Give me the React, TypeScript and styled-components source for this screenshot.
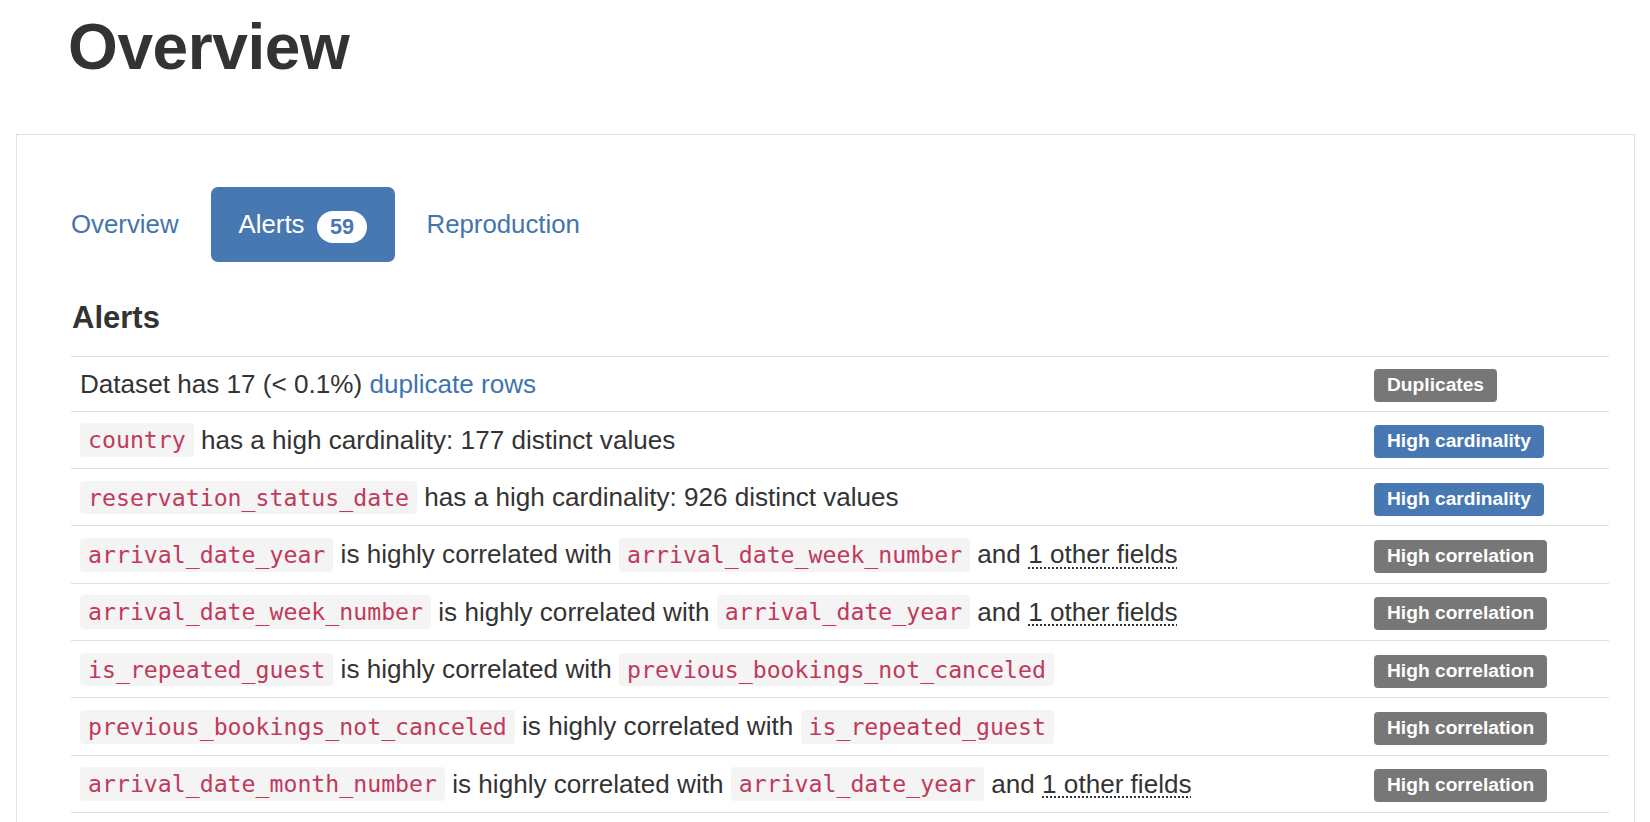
import styled, { createGlobalStyle } from 'styled-components';

type Part = { code?: string; text?: string; link?: string; abbr?: string };

interface IAlert {
  parts: Part[];
  label: string;
  kind: 'gray' | 'blue';
}

const alerts: IAlert[] = [
  {
    parts: [{ text: 'Dataset has 17 (< 0.1%) ' }, { link: 'duplicate rows' }],
    label: 'Duplicates',
    kind: 'gray',
  },
  {
    parts: [{ code: 'country' }, { text: ' has a high cardinality: 177 distinct values' }],
    label: 'High cardinality',
    kind: 'blue',
  },
  {
    parts: [{ code: 'reservation_status_date' }, { text: ' has a high cardinality: 926 distinct values' }],
    label: 'High cardinality',
    kind: 'blue',
  },
  {
    parts: [
      { code: 'arrival_date_year' },
      { text: ' is highly correlated with ' },
      { code: 'arrival_date_week_number' },
      { text: ' and ' },
      { abbr: '1 other fields' },
    ],
    label: 'High correlation',
    kind: 'gray',
  },
  {
    parts: [
      { code: 'arrival_date_week_number' },
      { text: ' is highly correlated with ' },
      { code: 'arrival_date_year' },
      { text: ' and ' },
      { abbr: '1 other fields' },
    ],
    label: 'High correlation',
    kind: 'gray',
  },
  {
    parts: [
      { code: 'is_repeated_guest' },
      { text: ' is highly correlated with ' },
      { code: 'previous_bookings_not_canceled' },
    ],
    label: 'High correlation',
    kind: 'gray',
  },
  {
    parts: [
      { code: 'previous_bookings_not_canceled' },
      { text: ' is highly correlated with ' },
      { code: 'is_repeated_guest' },
    ],
    label: 'High correlation',
    kind: 'gray',
  },
  {
    parts: [
      { code: 'arrival_date_month_number' },
      { text: ' is highly correlated with ' },
      { code: 'arrival_date_year' },
      { text: ' and ' },
      { abbr: '1 other fields' },
    ],
    label: 'High correlation',
    kind: 'gray',
  },
];

export default function App() {
  return (
    <>
      <GlobalStyle />
      <Page>
        <Title>Overview</Title>
        <Panel>
          <Nav>
            <li>
              <TabLink href="#">Overview</TabLink>
            </li>
            <li>
              <TabLink href="#" $active>
                Alerts<Count>59</Count>
              </TabLink>
            </li>
            <li>
              <TabLink href="#">Reproduction</TabLink>
            </li>
          </Nav>

          <TabContent>
            <SectionTitle>Alerts</SectionTitle>
            <AlertTable>
              <tbody>
                {alerts.map((a, i) => {
                  const hasCode = a.parts.some((p) => p.code);
                  return (
                    <Row key={i}>
                      <TextCell $code={hasCode}>
                        {a.parts.map((p, j) =>
                          p.code ? (
                            <Code key={j}>{p.code}</Code>
                          ) : p.link ? (
                            <Link key={j} href="#">
                              {p.link}
                            </Link>
                          ) : p.abbr ? (
                            <Abbr key={j} title="">
                              {p.abbr}
                            </Abbr>
                          ) : (
                            <span key={j}>{p.text}</span>
                          )
                        )}
                      </TextCell>
                      <LabelCell $code={hasCode}>
                        <Label $kind={a.kind}>{a.label}</Label>
                      </LabelCell>
                    </Row>
                  );
                })}
              </tbody>
            </AlertTable>
          </TabContent>
        </Panel>
      </Page>
    </>
  );
}

const GlobalStyle = createGlobalStyle`
  body {
    margin: 0;
    background: #fff;
    color: #333;
    font-family: "Liberation Sans", Arial, Helvetica, sans-serif;
  }
`;

const Page = styled.div`
  padding-top: 12px;
`;

const Title = styled.h1`
  margin: 0 0 52px 68px;
  font-size: 64px;
  font-weight: 700;
  line-height: 1.1;
  letter-spacing: -0.4px;
  color: #333;
`;

const Panel = styled.div`
  margin: 0 15px 0 16px;
  border: 1px solid #e1e1e1;
  padding: 52px 25px 40px 26px;
`;

const Nav = styled.ul`
  display: flex;
  gap: 4px;
  list-style: none;
  margin: 0;
  padding: 0;
`;

const TabLink = styled.a<{ $active?: boolean }>`
  display: inline-flex;
  align-items: center;
  gap: 13px;
  padding: 19px 28px;
  font-size: 25.8px;
  line-height: 36.4px;
  border-radius: 7px;
  text-decoration: none;
  color: ${(p) => (p.$active ? '#fff' : '#4474ae')};
  background: ${(p) => (p.$active ? '#4878b2' : 'transparent')};
`;

const Count = styled.span`
  margin-top: 5px;
  padding: 5px 12.5px;
  border-radius: 16px;
  background: #fff;
  color: #4878b2;
  font-size: 21.6px;
  font-weight: 700;
  line-height: 1;
`;

const TabContent = styled.div`
  padding: 39px 0 0 28px;
`;

const SectionTitle = styled.h4`
  margin: 0 0 21px 1px;
  font-size: 31px;
  font-weight: 700;
  line-height: 1.1;
`;

const AlertTable = styled.table`
  width: 100%;
  border-collapse: collapse;
  font-size: 26.1px;
  line-height: 36.6px;
`;

const Row = styled.tr`
  border-top: 1px solid #dedede;
  border-bottom: 1px solid #dedede;
`;

const TextCell = styled.td<{ $code: boolean }>`
  padding: ${(p) => (p.$code ? '9.85px' : '8.6px')} 9px;
  vertical-align: middle;
`;

const LabelCell = styled(TextCell)`
  width: 226px;
`;

const Code = styled.code`
  padding: 3.35px 8px;
  border-radius: 4px;
  background: #f4f4f4;
  color: #c03a5c;
  font-family: "DejaVu Sans Mono", "Liberation Mono", monospace;
  font-size: 23.2px;
  line-height: 1;
`;

const Link = styled.a`
  color: #3d74b1;
  text-decoration: none;
`;

const Abbr = styled.abbr`
  text-decoration: underline dotted 2px;
  text-underline-offset: 4px;
  cursor: help;
`;

const Label = styled.span<{ $kind: 'gray' | 'blue' }>`
  display: inline-block;
  vertical-align: middle;
  padding: 6px 13px 7px;
  border-radius: 4px;
  background: ${(p) => (p.$kind === 'blue' ? '#4878b2' : '#777')};
  color: #fff;
  font-size: 19.2px;
  font-weight: 700;
  line-height: 20px;
  white-space: nowrap;
`;
